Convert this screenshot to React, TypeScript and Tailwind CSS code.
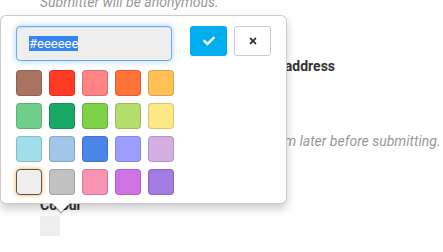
import React from "react";
import { FaCheck, FaTimes } from "react-icons/fa";

const swatches: string[][] = [
  ["#a97261", "#ff3b25", "#ff8585", "#ff7338", "#ffc157"],
  ["#6fcf8a", "#18a865", "#7fd149", "#b5dd6c", "#fde886"],
  ["#a1dfe8", "#a1c6e8", "#4a86e8", "#9b9eff", "#d5aee2"],
  ["#eeeeee", "#c1c1c1", "#f893b3", "#cf72e5", "#a47ae3"],
];

export default function App() {
  return (
    <div className="relative w-[443px] h-[252px] overflow-hidden bg-white font-['Roboto',sans-serif]">
      <div className="flex flex-col pl-10">
        <p className="-mt-[8px] text-[14px] leading-[20px] italic text-[#999999] whitespace-nowrap">
          Submitter will be anonymous.
        </p>
        <p className="mt-[44px] text-[14px] leading-[20px] font-bold text-[#333333] whitespace-nowrap">
          Send a confirmation copy to this email address
        </p>
        <div className="mt-[8px] h-[34px] w-[200px] rounded border border-[#cccccc]" />
        <p className="mt-[13px] text-[14px] leading-[20px] italic text-[#999999] whitespace-nowrap">
          You can check and preview the entire form later before submitting.
        </p>
        <p className="mt-[44px] text-[14px] leading-[20px] font-bold text-[#333333] whitespace-nowrap">
          Colour
        </p>
        <div className="mt-[1px] h-[20px] w-[20px] bg-[#eeeeee]" />
      </div>

      <div className="absolute left-0 top-[15px] w-[287px] h-[189px] rounded-[6px] border border-[rgba(0,0,0,0.2)] bg-white shadow-[0_5px_10px_rgba(0,0,0,0.2)]">
        <div className="flex flex-col pl-[15px] pt-[10px]">
          <div className="flex items-start">
            <div className="flex h-[35px] w-[156px] items-center rounded-[4px] border border-[#66afe9] bg-[#eeeeee] pl-[12px] shadow-[inset_0_1px_1px_rgba(0,0,0,0.075),0_0_6px_rgba(102,175,233,0.6)]">
              <span className="bg-[#3584f0] text-[13px] leading-[15px] text-white">#eeeeee</span>
            </div>
            <button className="ml-[18px] flex h-[30px] w-[37px] items-center justify-center rounded-[3px] bg-[#00aeef] text-white">
              <FaCheck className="h-[12px] w-[12px]" />
            </button>
            <button className="ml-[7px] flex h-[30px] w-[37px] items-center justify-center rounded-[3px] border border-[#cccccc] bg-white text-[#333333]">
              <FaTimes className="h-[10px] w-[10px]" />
            </button>
          </div>
          <div className="mt-[9px] flex flex-col gap-[7px]">
            {swatches.map((row, ri) => (
              <div key={ri} className="flex gap-[7px]">
                {row.map((c, ci) => {
                  const selected = ri === 3 && ci === 0;
                  return (
                    <div
                      key={ci}
                      className={
                        selected
                          ? "h-[26px] w-[26px] rounded-[4px] border border-[#555555] shadow-[0_0_4px_#ffa43a]"
                          : "h-[26px] w-[26px] rounded-[4px] border border-[rgba(0,0,0,0.15)]"
                      }
                      style={{ backgroundColor: c }}
                    />
                  );
                })}
              </div>
            ))}
          </div>
        </div>
        <div className="absolute left-[49px] top-full h-0 w-0 border-x-[11px] border-t-[11px] border-x-transparent border-t-[rgba(0,0,0,0.25)]" />
        <div className="absolute left-[50px] top-full -mt-[1px] h-0 w-0 border-x-[10px] border-t-[10px] border-x-transparent border-t-white" />
      </div>
    </div>
  );
}
